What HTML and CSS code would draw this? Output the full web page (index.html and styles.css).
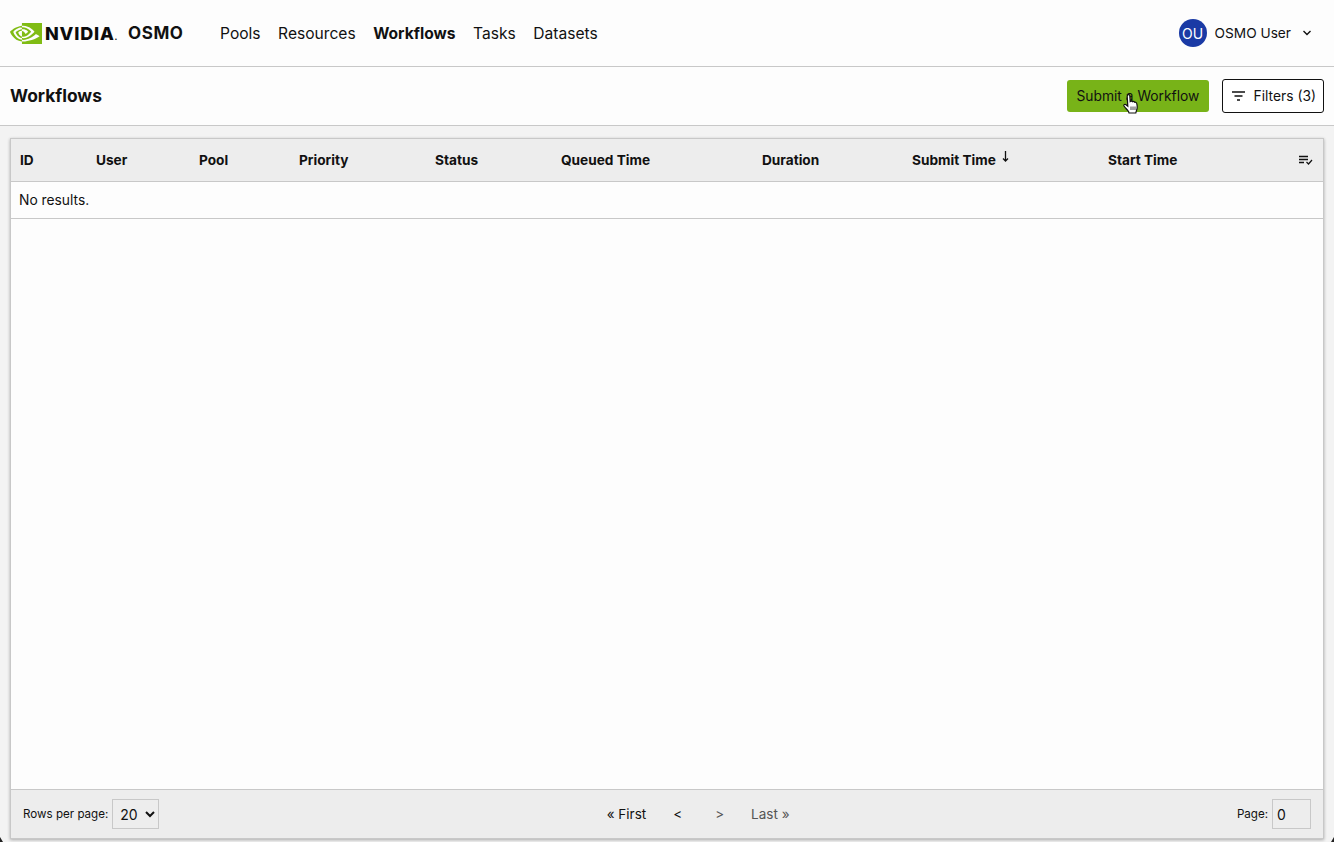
FILE: index.html
```html
<!DOCTYPE html>
<html lang="en">
<head>
<meta charset="utf-8">
<title>Workflows - NVIDIA OSMO</title>
<link rel="stylesheet" href="styles.css">
</head>
<body>
<nav class="topbar">
  <a class="brand" href="#">
    <svg class="brand-mark" width="32" height="21" viewBox="0 4.060 24 15.940" preserveAspectRatio="none">
      <path d="M8.948 8.798v-1.430a6.700 6.700 0 0 1 .424-.018c3.922-.124 6.493 3.374 6.493 3.374s-2.774 3.851-5.750 3.851c-.398 0-.787-.062-1.158-.185v-4.346c1.528.185 1.837.857 2.747 2.385l2.040-1.714s-1.492-1.952-4-1.952a6.016 6.016 0 0 0-.796.035m0-4.735v2.138l.424-.027c5.450-.185 9.010 4.470 9.010 4.470s-4.080 4.964-8.330 4.964c-.370 0-.733-.035-1.095-.097v1.325c.300.035.610.062.910.062 3.957 0 6.820-2.023 9.593-4.408.459.371 2.340 1.263 2.730 1.652-2.633 2.208-8.772 3.984-12.253 3.984-.335 0-.653-.018-.971-.053v1.864H24V4.063zm0 10.326v1.131c-3.657-.654-4.673-4.460-4.673-4.460s1.758-1.944 4.673-2.262v1.237H8.940c-1.528-.186-2.730 1.245-2.730 1.245s.680 2.412 2.739 3.110M2.456 10.900s2.164-3.197 6.500-3.533V6.201C4.153 6.590 0 10.653 0 10.653s2.350 6.802 8.948 7.420v-1.237c-4.840-.600-6.492-5.936-6.492-5.936z" fill="#80bc14"/>
    </svg>
    <span class="brand-nvidia">NVIDIA<span class="brand-dot">.</span></span>
    <span class="brand-osmo">OSMO</span>
  </a>
  <div class="nav-links">
    <a href="#">Pools</a>
    <a href="#">Resources</a>
    <a href="#" class="active">Workflows</a>
    <a href="#">Tasks</a>
    <a href="#">Datasets</a>
  </div>
  <div class="user-menu">
    <span class="avatar">OU</span>
    <span>OSMO User</span>
    <svg class="chevron" width="10" height="6" viewBox="0 0 10 6"><path d="M1.500 1L5 4.500L8.500 1" fill="none" stroke="#111" stroke-width="1.400"/></svg>
  </div>
</nav>

<header class="page-head">
  <h1>Workflows</h1>
  <div class="page-actions">
    <button class="btn btn-primary">Submit a Workflow</button>
    <button class="btn btn-outline">
      <svg width="13" height="10" viewBox="0 0 13 10"><path d="M0 1H13M2.500 5H10.500M5 9H8" fill="none" stroke="#111" stroke-width="1.300"/></svg>
      Filters (3)
    </button>
    <svg class="cursor" width="16" height="22" viewBox="0 0 16 21">
      <path d="M4.500 1.500C5.300 0.700 6.500 1 6.800 2L7.200 8C8 7.400 9 7.400 9.500 8.200C10.300 7.800 11.200 8 11.600 8.800C12.500 8.500 13.600 9 13.800 10.200C14.300 12.500 14.500 15 13.500 17L12.800 19.500H6L5.500 18C4 16 2.500 14.500 1 12.500C0.500 11.500 1.500 10.300 2.700 11L4.800 12.700L4.200 2.800Z" fill="#fff" stroke="#111" stroke-width="1.200"/>
      <path d="M8 13V16.500M10 13V16.500M12 13V16.500" stroke="#111" stroke-width="0.800" fill="none"/>
    </svg>
  </div>
</header>

<main class="content">
  <section class="table-card">
    <div class="table-row table-header">
      <div>ID</div>
      <div>User</div>
      <div>Pool</div>
      <div>Priority</div>
      <div>Status</div>
      <div>Queued Time</div>
      <div>Duration</div>
      <div class="sorted">Submit Time
        <svg width="7" height="11" viewBox="0 0 7 11"><path d="M3.500 0V10M1 7.500L3.500 10L6 7.500" fill="none" stroke="#111" stroke-width="1.300"/></svg>
      </div>
      <div>Start Time</div>
      <div class="col-picker">
        <svg width="14" height="10" viewBox="0 0 14 10"><path d="M0 1.500H9M0 4.500H9M0 7.500H5" fill="none" stroke="#111" stroke-width="1.400"/><path d="M7.500 7L9.500 9L13 5" fill="none" stroke="#111" stroke-width="1.200"/></svg>
      </div>
    </div>
    <div class="empty-row">No results.</div>
    <div class="table-fill"></div>
    <footer class="table-foot">
      <div class="rows-per-page">
        <label for="rows">Rows per page:</label>
        <select id="rows" class="field rows-select"><option>20</option></select>
      </div>
      <div class="pager">
        <a href="#" class="pg-first">« First</a>
        <a href="#" class="pg-prev">&lt;</a>
        <a href="#" class="pg-next off">&gt;</a>
        <a href="#" class="pg-last off">Last »</a>
      </div>
      <div class="page-no">
        <label for="page">Page:</label>
        <input id="page" class="field page-input" value="0">
      </div>
    </footer>
  </section>
</main>
<span class="corner corner-left"></span>
<span class="corner corner-right"></span>
</body>
</html>
```

FILE: styles.css
```css
/* OSMO workflows page */

html, body
{ margin: 0;
height: 100%;
overflow: hidden;
}

body
{ display: flex;
flex-direction: column;
height: 842px;
background: #f3f3f3;
color: #111;
font-family: Inter, "Noto Sans", sans-serif;
font-size: 14px;
}

a
{ color: inherit;
text-decoration: none;
}

/* Top bar */

.topbar
{ display: flex;
align-items: center;
height: 66px;
padding: 0 22px 0 10px;
background: #fdfdfd;
border-bottom: 1px solid #c8c8c8;
flex: none;
}

.brand
{ display: flex;
align-items: center;
width: 210px;
}

.brand-mark
{ margin-right: 3px;
}

.brand-nvidia
{ font-weight: 800;
font-size: 18px;
letter-spacing: 0.8px;
width: 83px;
color: #0c0c0c;
}

.brand-dot
{ font-size: 8px;
}

.brand-osmo
{ font-weight: 700;
font-size: 17px;
letter-spacing: 0.6px;
}

.nav-links
{ display: flex;
gap: 17.500px;
font-size: 15.600px;
}

.nav-links .active
{ font-weight: 700;
}

.user-menu
{ display: flex;
align-items: center;
margin-left: auto;
font-size: 13.700px;
}

.avatar
{ display: flex;
align-items: center;
justify-content: center;
width: 28px;
height: 28px;
margin-right: 8px;
border-radius: 50%;
background: #1a3aa5;
color: #fff;
font-size: 14px;
}

.chevron
{ margin-left: 11px;
}

/* Page heading */

.page-head
{ display: flex;
align-items: center;
justify-content: space-between;
height: 58px;
padding: 0 10px;
background: #fdfdfd;
border-bottom: 1px solid #c8c8c8;
flex: none;
}

.page-head h1
{ margin: 0 0 2px;
font-size: 17.400px;
font-weight: 700;
}

.page-actions
{ position: relative;
display: flex;
align-items: center;
gap: 13px;
font-size: 13.800px;
}

.btn
{ display: flex;
align-items: center;
box-sizing: border-box;
font: inherit;
color: #111;
border-radius: 3px;
cursor: pointer;
}

.btn-primary
{ height: 32px;
padding: 0 9.300px;
background: #78b318;
border: 0;
}

.btn-outline
{ gap: 9px;
height: 34px;
padding: 0 7px 0 9px;
background: #fff;
border: 1px solid #111;
}

.cursor
{ position: absolute;
left: 56px;
top: 14px;
}

/* Table */

.content
{ flex: 1;
display: flex;
padding: 12px 10px 3px;
min-height: 0;
}

.table-card
{ flex: 1;
display: flex;
flex-direction: column;
background: #fdfdfd;
border: 1px solid #c8c8c8;
box-shadow: 0 1px 3px rgba(0, 0, 0, 0.3);
}

.table-row
{ display: grid;
grid-template-columns: 76px 103px 100px 136px 126px 201px 150px 196px 1fr 36px;
}

.table-header
{ align-items: center;
height: 42px;
background: #ededed;
border-bottom: 1px solid #c8c8c8;
font-weight: 700;
font-size: 13.650px;
flex: none;
}

.table-header > div
{ padding-bottom: 1px;
padding-left: 9px;
}

.table-header .col-picker
{ display: flex;
padding-left: 12px;
}

.sorted svg
{ margin-left: 3px;
vertical-align: 3px;
}

.empty-row
{ height: 36px;
line-height: 36px;
padding-left: 8px;
border-bottom: 1px solid #c8c8c8;
font-size: 13.800px;
flex: none;
}

.table-fill
{ flex: 1;
}

.table-foot
{ display: flex;
justify-content: space-between;
align-items: center;
height: 48px;
padding: 0 12px;
background: #ededed;
border-top: 1px solid #c8c8c8;
flex: none;
}

.rows-per-page, .page-no
{ display: flex;
align-items: center;
gap: 4px;
font-size: 11.600px;
}

.field
{ box-sizing: border-box;
height: 30px;
background: transparent;
border: 1px solid #c8c8c8;
border-radius: 0;
color: #111;
font-family: inherit;
font-size: 14px;
}

.rows-select
{ width: 47px;
padding-left: 3px;
}

.page-input
{ width: 39px;
padding: 0 4px;
}

.pager
{ display: flex;
align-items: center;
gap: 27px;
font-size: 13.500px;
}

.pg-prev
{ margin-right: 6px;
}

.pager .off
{ color: #555;
}

/* Dark tips of the window corners */

.corner
{ position: absolute;
bottom: 0;
width: 3px;
height: 5px;
background: #222;
}

.corner-left
{ left: 0;
clip-path: polygon(0 0, 100% 100%, 0 100%);
}

.corner-right
{ right: 0;
clip-path: polygon(100% 0, 100% 100%, 0 100%);
}
```
